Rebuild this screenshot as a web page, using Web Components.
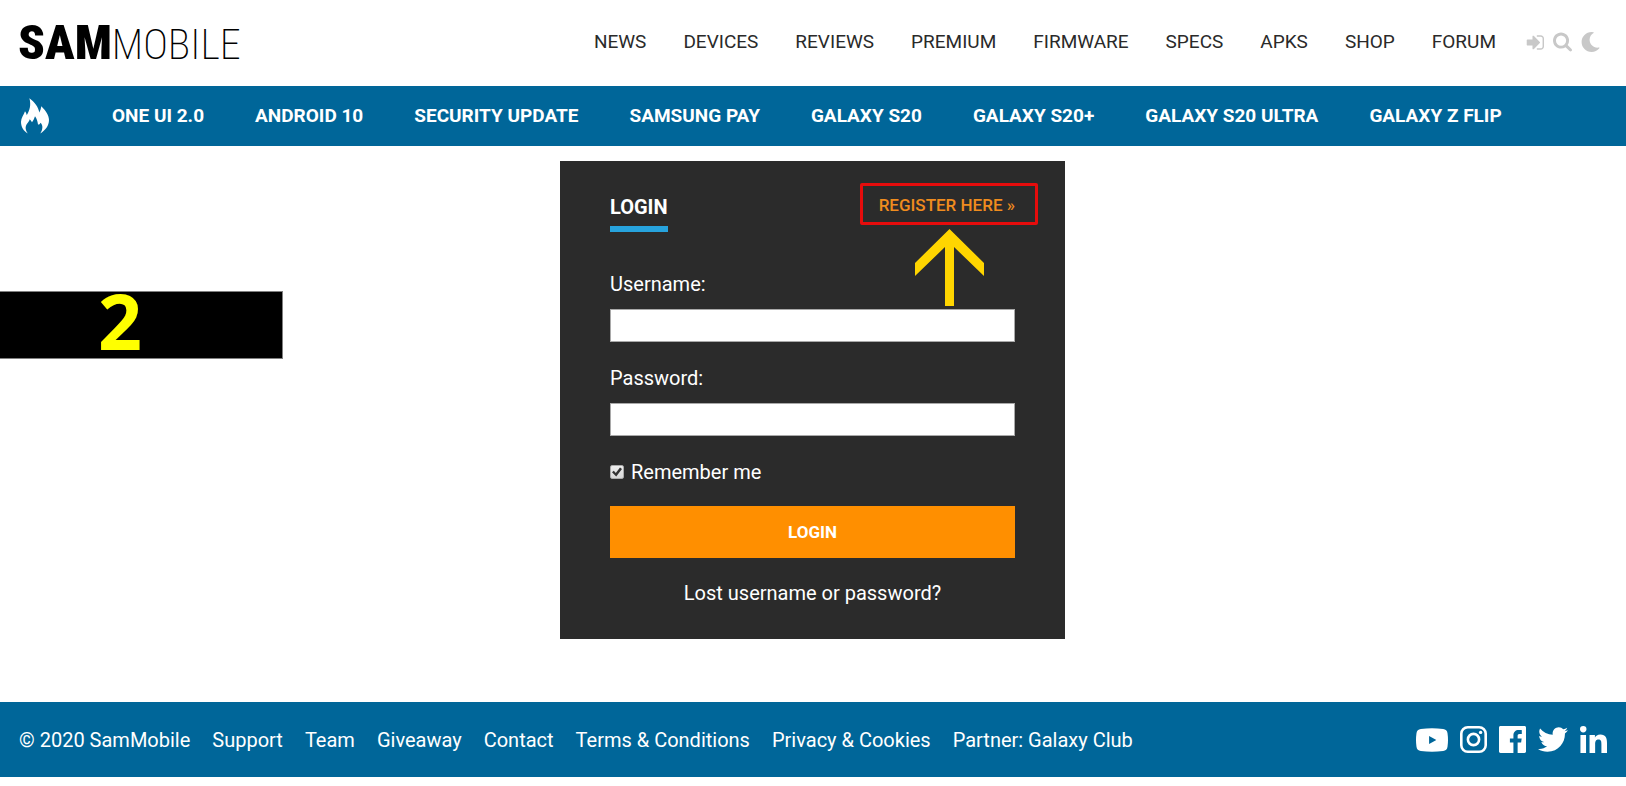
<!DOCTYPE html>
<html lang="en">
<head>
<meta charset="utf-8">
<meta name="viewport" content="width=device-width, initial-scale=1">
<title>SamMobile - Login</title>
<style>
  body { margin: 0; background: #fff; color: #2a2a2a; font: 20px/24px Roboto, "Noto Sans", sans-serif; }
</style>
</head>
<body>
<sm-page>
  <sm-header slot="header">
    <sm-link href="#news">NEWS</sm-link>
    <sm-link href="#devices">DEVICES</sm-link>
    <sm-link href="#reviews">REVIEWS</sm-link>
    <sm-link href="#premium">PREMIUM</sm-link>
    <sm-link href="#firmware">FIRMWARE</sm-link>
    <sm-link href="#specs">SPECS</sm-link>
    <sm-link href="#apks">APKS</sm-link>
    <sm-link href="#shop">SHOP</sm-link>
    <sm-link href="#forum">FORUM</sm-link>
  </sm-header>
  <sm-trending slot="header">
    <sm-link href="#one-ui">ONE UI 2.0</sm-link>
    <sm-link href="#android-10">ANDROID 10</sm-link>
    <sm-link href="#security">SECURITY UPDATE</sm-link>
    <sm-link href="#pay">SAMSUNG PAY</sm-link>
    <sm-link href="#s20">GALAXY S20</sm-link>
    <sm-link href="#s20-plus">GALAXY S20+</sm-link>
    <sm-link href="#s20-ultra">GALAXY S20 ULTRA</sm-link>
    <sm-link href="#z-flip">GALAXY Z FLIP</sm-link>
  </sm-trending>
  <sm-login-card></sm-login-card>
  <sm-step-label>2</sm-step-label>
  <sm-footer slot="footer">
    <span>© 2020 SamMobile</span>
    <sm-link href="#support">Support</sm-link>
    <sm-link href="#team">Team</sm-link>
    <sm-link href="#giveaway">Giveaway</sm-link>
    <sm-link href="#contact">Contact</sm-link>
    <sm-link href="#terms">Terms &amp; Conditions</sm-link>
    <sm-link href="#privacy">Privacy &amp; Cookies</sm-link>
    <sm-link href="#partner">Partner: Galaxy Club</sm-link>
  </sm-footer>
</sm-page>

<script>
const define = (name, html, setup) => {
  const template = document.createElement('template');
  template.innerHTML = html;
  customElements.define(name, class extends HTMLElement {
    constructor() {
      super();
      this.attachShadow({ mode: 'open' }).append(template.content.cloneNode(true));
    }
    connectedCallback() { if (setup) setup(this, this.shadowRoot); }
  });
};

const icons = {
  signin: ['64 256 1600 1280', '<path d="M1312 896q0 26-19 45l-544 544q-19 19-45 19t-45-19-19-45v-288h-448q-26 0-45-19t-19-45v-384q0-26 19-45t45-19h448v-288q0-26 19-45t45-19 45 19l544 544q19 19 19 45zm352-352v704q0 119-84.500 203.500t-203.500 84.500h-320q-13 0-22.500-9.500t-9.500-22.500q0-4-1-20t-.5-26.500 3-23.500 10-19.500 20.500-6.500h320q66 0 113-47t47-113v-704q0-66-47-113t-113-47h-312l-11.500-1-11.500-3-8-5.500-7-9-2-13.500q0-4-1-20t-.5-26.500 3-23.500 10-19.500 20.500-6.500h320q119 0 203.500 84.500t84.500 203.500z"/>'],
  search: ['64 128 1664 1664', '<path d="M1216 832q0-185-131.500-316.500t-316.500-131.500-316.500 131.500-131.500 316.500 131.500 316.500 316.500 131.500 316.500-131.500 131.500-316.500zm512 832q0 52-38 90t-90 38q-54 0-90-38l-343-342q-179 124-399 124-143 0-273.500-55.500t-225-150-150-225-55.500-273.500 55.500-273.500 150-225 225-150 273.500-55.500 273.500 55.500 225 150 150 225 55.500 273.500q0 220-124 399l343 343q37 37 37 90z"/>'],
  moon: ['27 0 457 512', '<path d="M283.211 512c78.962 0 151.079-35.925 198.857-94.792 7.068-8.708-.639-21.430-11.562-19.350-124.203 23.654-238.262-71.576-238.262-196.954 0-72.222 38.662-138.635 101.498-174.394 9.686-5.512 7.250-20.197-3.756-22.230A258.156 258.156 0 0 0 283.211 0c-141.309 0-256 114.511-256 256 0 141.309 114.511 256 256 256z"/>'],
  flame: ['63 293 84 107', '<path d="M88 293C104 304 115 319 118 336C121 330 123 324 124 317C137 330 147 345 147 358C147 376 136 390 121 399C128 388 130 376 122 367C119 372 116 373 114 372C113 362 110 353 105 347C103 354 100 360 96 365C94 361 91 358 89 356C88 365 76 370 77 384C78 390 80 395 84 399C70 392 63 378 63 364C63 352 72 342 75 332C78 336 80 340 80 344C89 330 94 312 88 293Z"/>'],
  youtube: ['0 0 33 24', '<path fill-rule="evenodd" d="M5 .6Q16.500-.6 28 .6Q32 1 32.500 5Q33.500 12 32.500 19Q32 23 28 23.400Q16.500 24.600 5 23.400Q1 23 .5 19Q-.5 12 .5 5Q1 1 5 .6ZM13.500 8V16L21 12Z"/>'],
  instagram: ['0 0 27 27', '<g fill="none" stroke="currentColor" stroke-width="2.600"><rect x="1.300" y="1.300" width="24.400" height="24.400" rx="6.500"/><circle cx="13.500" cy="13.500" r="5.600"/></g><circle cx="20.600" cy="6.400" r="1.700"/>'],
  facebook: ['0 0 24 24', '<path d="M22.676 0H1.324C.593 0 0 .593 0 1.324v21.352C0 23.408.593 24 1.324 24h11.494v-9.294H9.689v-3.621h3.129V8.410c0-3.099 1.894-4.785 4.659-4.785 1.325 0 2.464.097 2.796.141v3.240h-1.921c-1.500 0-1.792.721-1.792 1.771v2.311h3.584l-.465 3.630H16.560V24h6.115c.733 0 1.325-.592 1.325-1.324V1.324C24 .593 23.408 0 22.676 0"/>'],
  twitter: ['0 48 512 416', '<path d="M459.370 151.716c.325 4.548.325 9.097.325 13.645 0 138.720-105.583 298.558-298.558 298.558-59.452 0-114.680-17.219-161.137-47.106 8.447.974 16.568 1.299 25.340 1.299 49.055 0 94.213-16.568 130.274-44.832-46.132-.975-84.792-31.188-98.112-72.772 6.498.974 12.995 1.624 19.818 1.624 9.421 0 18.843-1.300 27.614-3.573-48.081-9.747-84.143-51.980-84.143-102.985v-1.299c13.969 7.797 30.214 12.670 47.431 13.319-28.264-18.843-46.781-51.005-46.781-87.391 0-19.492 5.197-37.360 14.294-52.954 51.655 63.675 129.300 105.258 216.365 109.807-1.624-7.797-2.599-15.918-2.599-24.040 0-57.828 46.782-104.934 104.934-104.934 30.213 0 57.502 12.670 76.670 33.137 23.715-4.548 46.456-13.320 66.599-25.340-7.798 24.366-24.366 44.833-46.132 57.827 21.117-2.273 41.584-8.122 60.426-16.243-14.292 20.791-32.161 39.308-52.628 54.253z"/>'],
  linkedin: ['0 0 448 448', '<path d="M100.280 448H7.400V148.900h92.880zM53.790 108.100C24.090 108.100 0 83.500 0 53.800a53.790 53.790 0 0 1 107.580 0c0 29.700-24.100 54.300-53.790 54.300zM447.900 448h-92.680V302.400c0-34.700-.7-79.200-48.290-79.200-48.290 0-55.690 37.700-55.690 76.700V448h-92.780V148.900h89.080v40.800h1.300c12.400-23.500 42.690-48.300 87.880-48.300 94 0 111.280 61.900 111.280 142.300V448z"/>']
};

define('sm-icon', `
  <style>
    :host { display: block; }
    svg { display: block; width: 100%; height: 100%; fill: currentColor; }
  </style>
  <svg aria-hidden="true"></svg>`,
  (host, root) => {
    const [box, body] = icons[host.getAttribute('name')];
    const svg = root.querySelector('svg');
    svg.setAttribute('viewBox', box);
    svg.innerHTML = body;
  });

define('sm-link', `
  <style>
    :host { display: block; white-space: nowrap; }
    a { color: inherit; text-decoration: none; }
    a:hover { text-decoration: underline; }
  </style>
  <a><slot></slot></a>`,
  (host, root) => { root.querySelector('a').href = host.getAttribute('href'); });

define('sm-page', `
  <style>
    :host { display: block; position: relative; }
    main { padding: 15px 17px 63px 16px; }
  </style>
  <slot name="header"></slot>
  <main><slot></slot></main>
  <slot name="footer"></slot>`);

define('sm-logo', `
  <style>
    :host { display: block; padding-top: 4px; }
    a { display: flex; align-items: baseline; color: #000; text-decoration: none; line-height: 48px; white-space: nowrap; }
    b { font: 900 49px/48px "Liberation Sans Narrow", "Roboto Condensed", Roboto, sans-serif; }
    span { font: 200 42px/48px "Roboto Condensed", Roboto, sans-serif; }
  </style>
  <a href="#home"><b>SAM</b><span>MOBILE</span></a>`);

define('sm-header', `
  <style>
    :host { display: flex; align-items: center; justify-content: space-between; box-sizing: border-box; min-height: 86px; padding: 0 26px 2px 18px; font-size: 19px; }
    .right, nav, .tools { display: flex; align-items: center; }
    nav { gap: 37px; }
    .right { gap: 30px; }
    .tools { gap: 9px; }
    button { display: block; padding: 0; border: 0; background: none; color: #c8c8c8; }
    sm-icon { width: 19px; height: 20px; }
    .small { width: 18px; height: 15px; }
  </style>
  <sm-logo></sm-logo>
  <div class="right">
    <nav aria-label="Main"><slot></slot></nav>
    <div class="tools">
      <button type="button" aria-label="Sign in"><sm-icon class="small" name="signin"></sm-icon></button>
      <button type="button" aria-label="Search"><sm-icon name="search"></sm-icon></button>
      <button type="button" aria-label="Dark mode"><sm-icon name="moon"></sm-icon></button>
    </div>
  </div>`);

define('sm-trending', `
  <style>
    :host { display: flex; align-items: center; gap: 63px; min-height: 60px; padding: 0 21px; background: #006699; color: #fff; font-size: 19px; font-weight: 700; }
    sm-icon { width: 28px; height: 36px; }
    nav { display: flex; gap: 51px; }
  </style>
  <sm-icon name="flame"></sm-icon>
  <nav aria-label="Trending"><slot></slot></nav>`);

define('sm-field', `
  <style>
    :host { display: block; margin-bottom: 24px; }
    label { display: block; margin-bottom: 13px; }
    input { display: block; box-sizing: border-box; width: 100%; height: 33px; padding: 4px 8px; border: 1px solid #a9a9a9; background: #fff; font: inherit; }
  </style>
  <label for="box"></label>
  <input id="box">`,
  (host, root) => {
    root.querySelector('label').textContent = host.getAttribute('label');
    root.querySelector('input').type = host.getAttribute('type');
  });

define('sm-login-card', `
  <style>
    :host { display: block; box-sizing: border-box; max-width: 505px; margin: 0 auto; padding: 34px 50px; background: #2b2b2b; color: #fff; }
    .top { display: flex; justify-content: space-between; align-items: flex-start; margin-bottom: 40px; }
    h1 { margin: 0; padding-bottom: 7px; border-bottom: 6px solid #27a3dd; font-size: 20px; line-height: 24px; font-weight: 700; }
    .register { position: relative; font-size: 17px; line-height: 20px; font-weight: 500; color: #f08c1e; }
    .frame { position: absolute; inset: -12px -23px -10px -19px; border: 3px solid #e60c0c; border-radius: 2px; pointer-events: none; }
    .arrow { position: absolute; left: 36px; top: 34px; width: 69px; height: 77px; fill: #ffd500; pointer-events: none; }
    .remember { display: flex; align-items: center; gap: 7px; margin-bottom: 22px; }
    .remember input { appearance: none; position: relative; width: 14px; height: 14px; margin: 0; border: 1px solid #aaa; border-radius: 2px; background: linear-gradient(#eee, #d8d8d8); }
    .remember input:checked::after { content: ""; position: absolute; inset: 1px; background: #333; clip-path: polygon(0 52%, 18% 38%, 38% 60%, 80% 4%, 100% 20%, 42% 96%); }
    button { display: block; width: 100%; height: 52px; margin-bottom: 23px; padding: 0; border: 0; background: #ff8f00; color: #fff; font: 700 17px/20px Roboto, sans-serif; }
    .lost { display: flex; justify-content: center; }
  </style>
  <form onsubmit="return false">
    <div class="top">
      <h1>LOGIN</h1>
      <div class="register">
        <sm-link href="#register">REGISTER HERE »</sm-link>
        <div class="frame"></div>
        <svg class="arrow" viewBox="0 0 69 77" aria-hidden="true"><path d="M34.500 0L69 34V47L39 18V77H30V18L0 47V34Z"/></svg>
      </div>
    </div>
    <sm-field label="Username:" type="text"></sm-field>
    <sm-field label="Password:" type="password"></sm-field>
    <div class="remember">
      <input type="checkbox" id="remember" checked>
      <label for="remember">Remember me</label>
    </div>
    <button type="submit">LOGIN</button>
    <sm-link class="lost" href="#lost">Lost username or password?</sm-link>
  </form>`);

define('sm-step-label', `
  <style>
    :host { position: absolute; left: 0; top: 291px; box-sizing: border-box; width: 283px; height: 68px; padding-left: 98px; border: 1px solid #808080; border-left: 0; background: #000; color: #ff0; font: 700 77px/58px "Noto Sans", "Open Sans", sans-serif; }
  </style>
  <slot></slot>`);

define('sm-footer', `
  <style>
    :host { display: flex; align-items: center; justify-content: space-between; min-height: 75px; margin-bottom: 9px; padding: 0 19px; background: #006699; color: #fff; }
    nav, .social { display: flex; align-items: center; }
    nav { gap: 22px; }
    .social { gap: 12px; }
    a { display: block; color: inherit; }
    sm-icon { width: 27px; height: 27px; }
    .youtube { width: 32px; height: 24px; }
    .twitter { width: 30px; }
  </style>
  <nav aria-label="Footer"><slot></slot></nav>
  <div class="social">
    <a href="#youtube" aria-label="YouTube"><sm-icon class="youtube" name="youtube"></sm-icon></a>
    <a href="#instagram" aria-label="Instagram"><sm-icon name="instagram"></sm-icon></a>
    <a href="#facebook" aria-label="Facebook"><sm-icon name="facebook"></sm-icon></a>
    <a href="#twitter" aria-label="Twitter"><sm-icon class="twitter" name="twitter"></sm-icon></a>
    <a href="#linkedin" aria-label="LinkedIn"><sm-icon name="linkedin"></sm-icon></a>
  </div>`);
</script>
</body>
</html>
